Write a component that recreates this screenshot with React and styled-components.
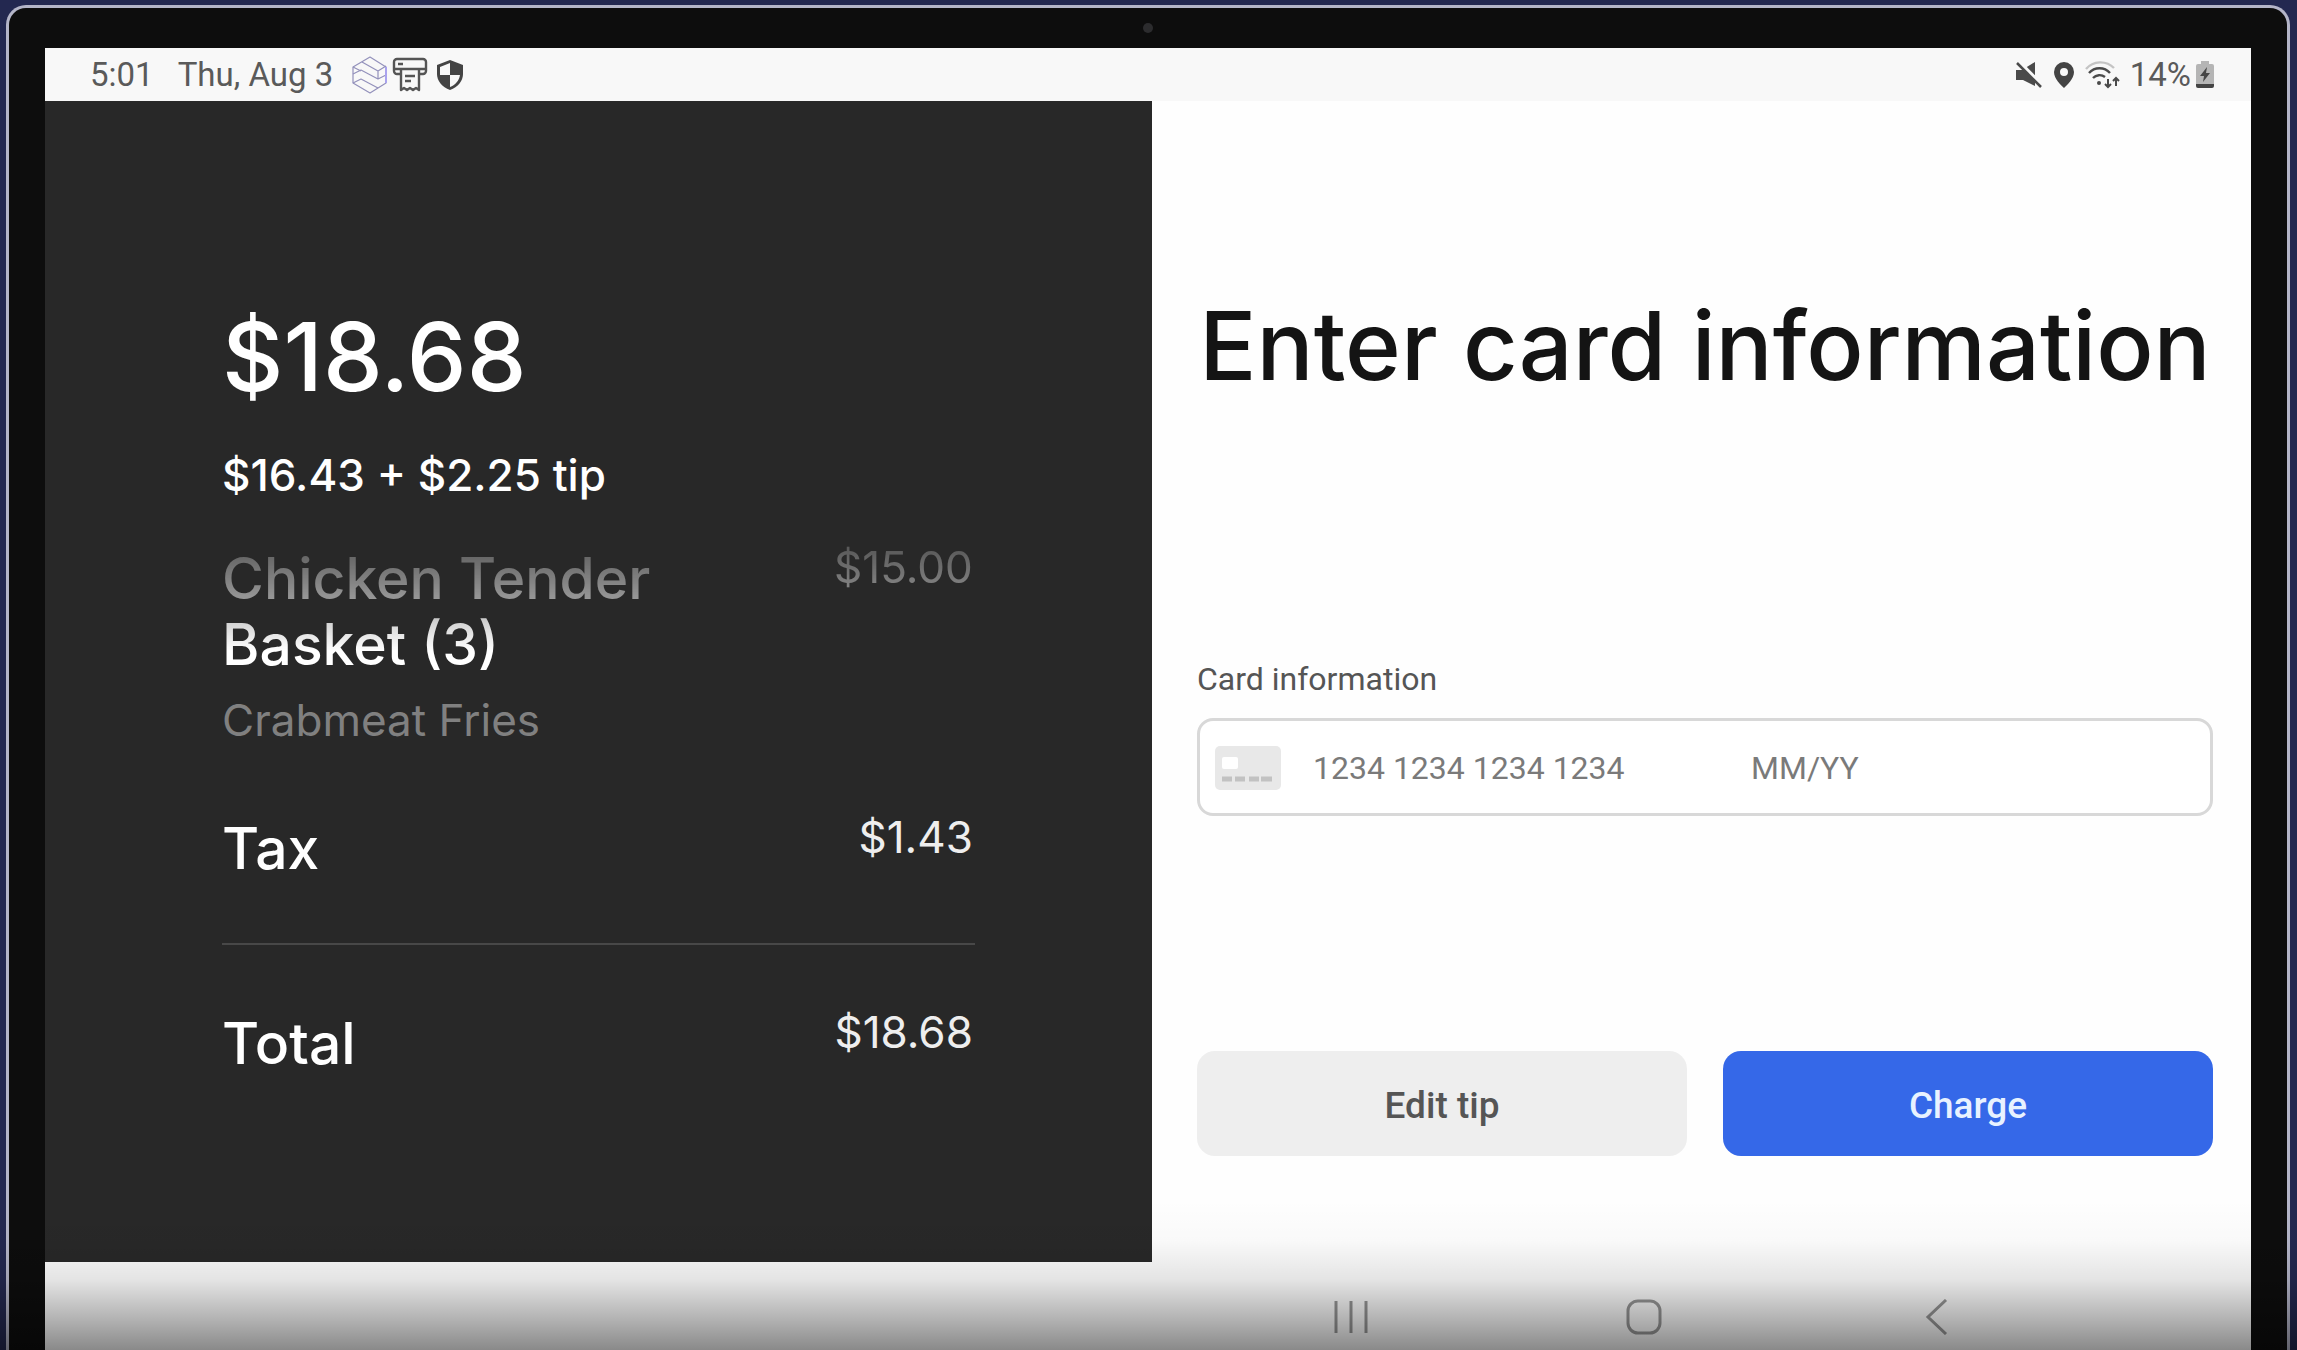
import React from 'react'
import styled, { createGlobalStyle } from 'styled-components'

const lines = [
    { name: 'Tax', price: '$1.43' },
    { name: 'Total', price: '$18.68', divided: true },
]

export default function App() {
    return (<>
        <GlobalStyle />
        <Desk>
            <Tablet>
                <Camera />
                <Screen>
                    <StatusBar />
                    <Checkout>
                        <Receipt />
                        <CardForm />
                    </Checkout>
                    <SystemNav />
                </Screen>
            </Tablet>
            <Shade />
        </Desk>
    </>)
}

function StatusBar() {
    return (
        <Bar>
            <BarGroup $gap={19}>
                <BarGroup $gap={24}>
                    <span>5:01</span>
                    <span>Thu, Aug 3</span>
                </BarGroup>
                <BarGroup $gap={4}>
                    <LayersIcon />
                    <PrinterIcon />
                    <ShieldIcon />
                </BarGroup>
            </BarGroup>
            <BarGroup $gap={9}>
                <MuteIcon />
                <PinIcon />
                <WifiIcon />
                <BarGroup $gap={4}>
                    <span>14%</span>
                    <BatteryIcon />
                </BarGroup>
            </BarGroup>
        </Bar>
    )
}

function Receipt() {
    return (
        <Dark>
            <Amount>$18.68</Amount>
            <Breakdown>$16.43 + $2.25 tip</Breakdown>
            <FadedLine>
                <Name>Chicken Tender Basket (3)</Name>
                <Price>$15.00</Price>
            </FadedLine>
            <Option>Crabmeat Fries</Option>
            {lines.map(line => (
                <Line key={line.name} $divided={line.divided}>
                    <Name>{line.name}</Name>
                    <Price>{line.price}</Price>
                </Line>
            ))}
        </Dark>
    )
}

function CardForm() {
    return (
        <Form onSubmit={e => e.preventDefault()}>
            <Title>Enter card information</Title>
            <Label htmlFor='card-number'>Card information</Label>
            <Field>
                <CardIcon />
                <NumberInput id='card-number' placeholder='1234 1234 1234 1234' inputMode='numeric' />
                <ExpiryInput placeholder='MM/YY' aria-label='Expiry date' inputMode='numeric' />
            </Field>
            <Actions>
                <Button type='button'>Edit tip</Button>
                <Button type='submit' $primary>Charge</Button>
            </Actions>
        </Form>
    )
}

function SystemNav() {
    return (
        <Nav>
            <NavButton type='button' aria-label='Recent apps'>
                <svg width='36' height='36' viewBox='0 0 36 36' fill='none' stroke='#989898' strokeWidth='3'>
                    <path d='M3 2v32M18 2v32M33 2v32' />
                </svg>
            </NavButton>
            <NavButton type='button' aria-label='Home'>
                <svg width='36' height='36' viewBox='0 0 36 36' fill='none' stroke='#989898' strokeWidth='3'>
                    <rect x='2' y='2' width='32' height='32' rx='10' />
                </svg>
            </NavButton>
            <NavButton type='button' aria-label='Back'>
                <svg width='36' height='36' viewBox='0 0 36 36' fill='none' stroke='#989898' strokeWidth='3'>
                    <path d='M27 1 9 18l18 17' />
                </svg>
            </NavButton>
        </Nav>
    )
}

const LayersIcon = () => (
    <svg width='36' height='38' viewBox='0 0 36 38' fill='none' stroke='#9391bb' strokeWidth='1.2' strokeLinejoin='round'>
        <path d='M18 1 34 11v16L18 37 1 27V11z' />
        <path d='M10 6l16 9 8-5M26 15v8M1 18l8-4 17 9 8-4M1 11l8 4M1 27l8-4 17 9' />
        <path d='M34 11v16' stroke='#a9a2ee' strokeWidth='2' />
    </svg>
)

const PrinterIcon = () => (
    <svg width='36' height='36' viewBox='0 0 36 36' fill='none' stroke='#555' strokeWidth='2.4' strokeLinejoin='round'>
        <path d='M8 17H5a3 3 0 0 1-3-3V5a3 3 0 0 1 3-3h26a3 3 0 0 1 3 3v9a3 3 0 0 1-3 3h-3' />
        <path d='M2 12h32M6 7h5' />
        <path d='M9 13v20l3-2 3 2 3-2 3 2 3-2 3 2V13M13 19h10M13 24h6' />
    </svg>
)

const ShieldIcon = () => (
    <svg width='36' height='36' viewBox='0 0 36 36'>
        <path d='M18 3 31 8v9c0 7-5 13-13 16C10 30 5 24 5 17V8z' fill='#444' />
        <path d='M18 6v12H8V10zM18 18h10c-1 6-5 10-10 12z' fill='#f8f8f8' />
    </svg>
)

const MuteIcon = () => (
    <svg width='28' height='28' viewBox='0 0 28 28'>
        <path d='M1 9h6l13-8v24L8 19H1z' fill='#4a4a4a' />
        <path d='M3 0 28 25' stroke='#f8f8f8' strokeWidth='4' />
        <path d='M2 2 26 26' stroke='#4a4a4a' strokeWidth='2.5' />
    </svg>
)

const PinIcon = () => (
    <svg width='24' height='28' viewBox='0 0 24 28'>
        <path d='M12 1a10 10 0 0 0-10 10c0 7 7 13 10 16 3-3 10-9 10-16A10 10 0 0 0 12 1zm0 6a4 4 0 1 1 0 8 4 4 0 0 1 0-8z' fill='#444' fillRule='evenodd' />
    </svg>
)

const WifiIcon = () => (
    <svg width='36' height='28' viewBox='0 0 36 28' fill='none' strokeWidth='2.4'>
        <path d='M1 8a19 19 0 0 1 28-1' stroke='#c4c4c4' />
        <path d='M4 12a14 14 0 0 1 21 0M8 17a9 9 0 0 1 12-1' stroke='#4a4a4a' />
        <circle cx='14' cy='22' r='2' fill='#4a4a4a' />
        <path d='M23 18v8M20 23l3 3 3-3M31 25v-8M28 20l3-3 3 3' stroke='#4a4a4a' strokeWidth='2' />
    </svg>
)

const BatteryIcon = () => (
    <svg width='20' height='28' viewBox='0 0 20 28'>
        <path d='M6 0h8v3h3a2 2 0 0 1 2 2v18H1V5a2 2 0 0 1 2-2h3z' fill='#b5b5b5' />
        <path d='M1 23h18v2a2 2 0 0 1-2 2H3a2 2 0 0 1-2-2z' fill='#444' />
        <path d='M12 6 5 15h4l-1 6 7-9h-4z' fill='#444' />
    </svg>
)

const CardIcon = () => (
    <svg width='66' height='44' viewBox='0 0 66 44'>
        <rect width='66' height='44' rx='5' fill='#e8e8e8' />
        <rect x='7' y='11' width='16' height='12' rx='2' fill='#fff' />
        <path d='M7 33h10M20 33h10M34 33h10M46 33h11' stroke='#c2c2c2' strokeWidth='5' />
    </svg>
)

const GlobalStyle = createGlobalStyle`
    * {
        box-sizing: border-box;
    }
    body {
        margin: 0;
        background: #232850;
        font-family: Inter, 'Liberation Sans', sans-serif;
    }
`

const Desk = styled.div`
    position: relative;
    display: flex;
    min-height: 100vh;
    padding: 5px 7px 0 6px;
    overflow: hidden;
`

const Tablet = styled.div`
    position: relative;
    flex: 1;
    display: flex;
    padding: 40px 36px 0;
    border: 3px solid #b4b5c8;
    border-bottom: 0;
    border-radius: 20px 20px 0 0;
    background: #0d0d0d;
`

const Camera = styled.div`
    position: absolute;
    top: 15px;
    left: 50%;
    width: 10px;
    height: 10px;
    margin-left: -5px;
    border-radius: 50%;
    background: #2c2c2e;
`

const Screen = styled.main`
    flex: 1;
    display: flex;
    flex-direction: column;
    min-width: 0;
    background: #fefefe;
`

const Bar = styled.header`
    display: flex;
    justify-content: space-between;
    height: 53px;
    padding: 0 36px 0 45px;
    background: #f8f8f8;
    color: #5a5a5a;
    font: 33px/53px Roboto, 'Liberation Sans', sans-serif;
`

const BarGroup = styled.div`
    display: flex;
    align-items: center;
    gap: ${p => p.$gap}px;
`

const Checkout = styled.div`
    display: grid;
    grid-template-columns: minmax(0, 1107fr) minmax(0, 1099fr);
`

const Dark = styled.section`
    padding: 196px 16% 185px;
    background: #282828;
    color: #fff;
`

const Amount = styled.div`
    font-size: 95px;
    font-weight: 500;
    line-height: 120px;
`

const Breakdown = styled.div`
    margin: 30px 0 43px;
    font-size: 44px;
    font-weight: 500;
    line-height: 56px;
`

const Line = styled.div`
    display: flex;
    justify-content: space-between;
    align-items: flex-start;
    ${p => p.$divided && `
        margin-top: 61px;
        padding-top: 66px;
        border-top: 2px solid #484848;
    `}
`

const FadedLine = styled(Line)`
    mask-image: linear-gradient(rgba(0, 0, 0, 0.24), rgba(0, 0, 0, 0.53) 55px, rgba(0, 0, 0, 0.8) 77px, #000 105px);
`

const Name = styled.div`
    max-width: 480px;
    font-size: 57px;
    font-weight: 500;
    line-height: 66px;
`

const Price = styled.div`
    padding-right: 2px;
    color: #eee;
    font-size: 44px;
    line-height: 42px;
`

const Option = styled.div`
    margin: 16px 0 70px;
    color: #808080;
    font-size: 44px;
    line-height: 52px;
`

const Form = styled.form`
    display: flex;
    flex-direction: column;
    padding: 185px 38px 106px 45px;
    font-family: Roboto, 'Liberation Sans', sans-serif;
`

const Title = styled.h1`
    margin: 0;
    color: #141414;
    font: 500 95px/120px Inter, 'Liberation Sans', sans-serif;
    text-align: center;
    white-space: nowrap;
`

const Label = styled.label`
    margin-top: 252px;
    color: #555;
    font-size: 32px;
    line-height: 42px;
`

const Field = styled.div`
    display: flex;
    align-items: center;
    height: 98px;
    margin-top: 18px;
    padding: 1px 15px 0;
    border: 3px solid #d8d8d8;
    border-radius: 16px;
    background: #fff;
`

const Input = styled.input`
    min-width: 0;
    padding: 0;
    border: 0;
    outline: 0;
    background: none;
    color: #333;
    font: 32px/40px Roboto, 'Liberation Sans', sans-serif;

    &::placeholder {
        color: #7a7a7a;
        opacity: 1;
    }
`

const NumberInput = styled(Input)`
    width: 398px;
    margin: 0 40px 0 32px;
`

const ExpiryInput = styled(Input)`
    flex: 1;
`

const Actions = styled.div`
    display: grid;
    grid-template-columns: 1fr 1fr;
    gap: 36px;
    margin-top: auto;
`

const Button = styled.button`
    height: 105px;
    padding: 4px 0 0;
    border: 0;
    border-radius: 18px;
    background: ${p => p.$primary ? '#3568e8' : '#eee'};
    color: ${p => p.$primary ? '#e8f2ff' : '#555'};
    font: 500 37px/44px Roboto, 'Liberation Sans', sans-serif;
`

const Nav = styled.nav`
    flex: 1;
    display: flex;
    justify-content: flex-end;
    gap: 257px;
    padding: 37px 296px 0 0;
`

const NavButton = styled.button`
    width: 36px;
    height: 36px;
    padding: 0;
    border: 0;
    background: none;
`

// darkens the lower edge of the whole scene
const Shade = styled.div`
    position: absolute;
    right: 0;
    bottom: 0;
    left: 0;
    height: 150px;
    background: linear-gradient(rgba(0, 0, 0, 0), rgba(0, 0, 0, 0.02) 27%, rgba(0, 0, 0, 0.1) 53%, rgba(0, 0, 0, 0.3) 80%, rgba(0, 0, 0, 0.46));
    pointer-events: none;
`
